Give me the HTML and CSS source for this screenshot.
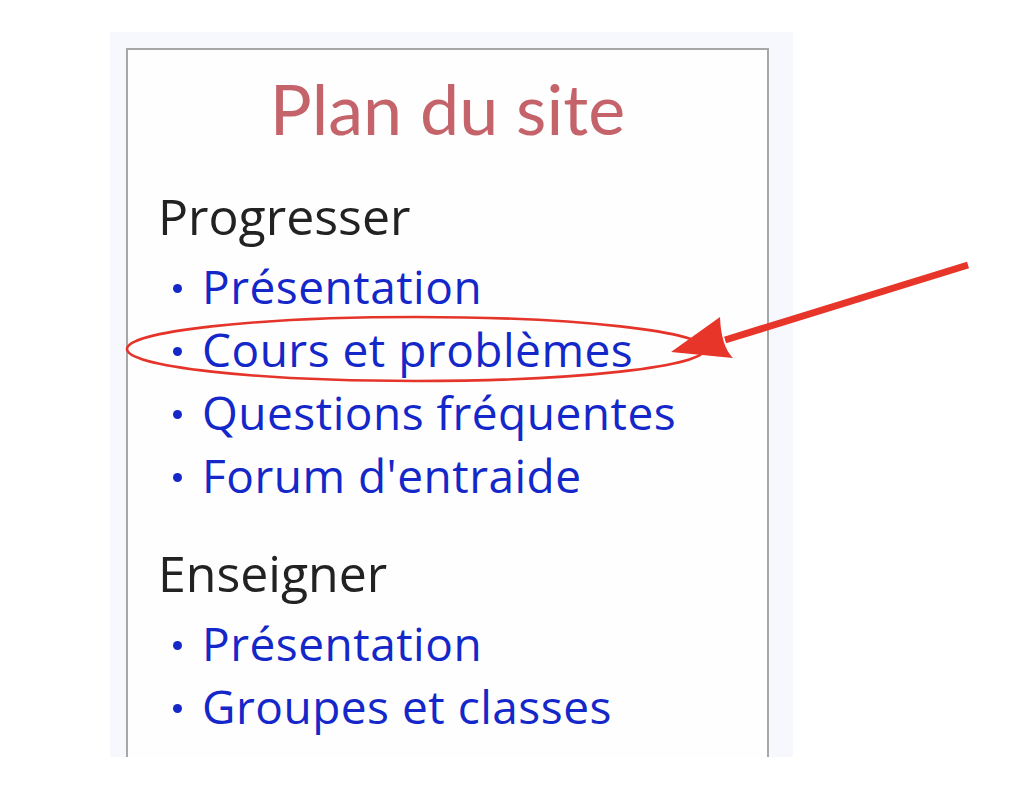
FILE: index.html
```html
<!DOCTYPE html>
<html lang="fr">
<head>
<meta charset="utf-8">
<title>Plan du site</title>
<link rel="stylesheet" href="styles.css">
</head>
<body>
<div class="panel">
  <div class="box">
    <h1 class="title">Plan du site</h1>
    <h2 class="section">Progresser</h2>
    <ul class="links">
      <li><a href="#">Présentation</a></li>
      <li><a href="#">Cours et problèmes</a></li>
      <li><a href="#">Questions fréquentes</a></li>
      <li><a href="#">Forum d'entraide</a></li>
    </ul>
    <h2 class="section section-2">Enseigner</h2>
    <ul class="links">
      <li><a href="#">Présentation</a></li>
      <li><a href="#">Groupes et classes</a></li>
    </ul>
  </div>
</div>
<svg class="annot" width="1032" height="800" viewBox="0 0 1032 800" aria-hidden="true">
  <ellipse cx="416" cy="349" rx="289" ry="32" fill="none" stroke="#e5352b" stroke-width="2.6"/>
  <line x1="968" y1="265" x2="725" y2="340" stroke="#e8352a" stroke-width="7"/>
  <path d="M720,317 Q721,346 733,358" fill="none" stroke="#ffffff" stroke-width="3"/>
  <path d="M671,352 L720,317 Q721,346 733,358 Z" fill="#e8352a"/>
</svg>
</body>
</html>
```
FILE: styles.css
```css
html, body {
  margin: 0;
  padding: 0;
  background: #ffffff;
}

body {
  width: 1032px;
  height: 800px;
  overflow: hidden;
  position: relative;
  font-family: "Open Sans", "Noto Sans", sans-serif;
}

.panel {
  margin: 32px 0 0 110px;
  width: 683px;
  height: 725px;
  background: #f7f8fe;
  overflow: hidden;
  padding: 16px 0 0 16px;
  box-sizing: border-box;
}

.box {
  width: 643px;
  height: 900px;
  box-sizing: border-box;
  border: 2px solid #a7a7a7;
  background: #fefefe;
  padding: 18px 0 0 30px;
}

.title {
  margin: 0 0 0 -30px;
  font-family: Lato, "Open Sans", sans-serif;
  font-weight: 400;
  font-size: 70px;
  line-height: 80px;
  color: #c5636b;
  text-align: center;
}

.section {
  margin: 38px 0 0 0;
  font-weight: 400;
  font-size: 50px;
  line-height: 60px;
  letter-spacing: 0;
  color: #222222;
}

.section-2 {
  margin-top: 36px;
}

.links {
  list-style: none;
  margin: 9px 0 0 0;
  padding: 0 0 0 15px;
}

.links li {
  font-size: 46px;
  font-weight: 500;
  line-height: 63px;
  letter-spacing: 0.5px;
  white-space: nowrap;
}

.links li::before {
  content: "";
  display: inline-block;
  width: 9px;
  height: 9px;
  border-radius: 50%;
  background: #1427c9;
  vertical-align: 11.5px;
  margin-right: 20px;
}

.links a {
  color: #1427c9;
  text-decoration: none;
}

.annot {
  position: absolute;
  left: 0;
  top: 0;
  pointer-events: none;
}
```
